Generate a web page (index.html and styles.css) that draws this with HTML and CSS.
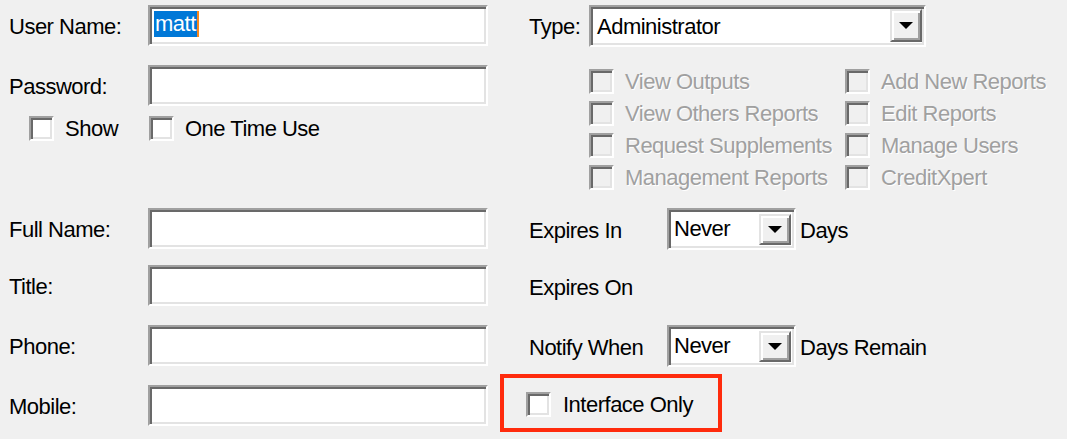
FILE: index.html
```html
<!DOCTYPE html>
<html>
<head>
<meta charset="utf-8">
<link rel="stylesheet" href="styles.css">
</head>
<body>
<div class="dialog">
  <div class="cell top-left">
    <div class="row">
      <span class="lbl">User Name:</span>
      <div class="field"><span class="sel">matt</span><span class="caret"></span></div>
    </div>
    <div class="row row-pass">
      <span class="lbl">Password:</span>
      <div class="field"></div>
    </div>
    <div class="opts">
      <div class="cb cb-show"><span class="box"></span><span class="cb-text">Show</span></div>
      <div class="cb"><span class="box"></span><span class="cb-text">One Time Use</span></div>
    </div>
  </div>
  <div class="cell top-right">
    <div class="row">
      <span class="lbl-type">Type:</span>
      <div class="combo combo-type">
        <span class="combo-text">Administrator</span>
        <span class="combo-btn"><span class="arrow"></span></span>
      </div>
    </div>
    <div class="perms">
      <div class="cb disabled"><span class="box"></span><span class="cb-text">View Outputs</span></div>
      <div class="cb disabled"><span class="box"></span><span class="cb-text">Add New Reports</span></div>
      <div class="cb disabled"><span class="box"></span><span class="cb-text">View Others Reports</span></div>
      <div class="cb disabled"><span class="box"></span><span class="cb-text">Edit Reports</span></div>
      <div class="cb disabled"><span class="box"></span><span class="cb-text">Request Supplements</span></div>
      <div class="cb disabled"><span class="box"></span><span class="cb-text">Manage Users</span></div>
      <div class="cb disabled"><span class="box"></span><span class="cb-text">Management Reports</span></div>
      <div class="cb disabled"><span class="box"></span><span class="cb-text">CreditXpert</span></div>
    </div>
  </div>

  <div class="cell left">
    <div class="row"><span class="lbl">Full Name:</span><div class="field"></div></div>
  </div>
  <div class="cell right">
    <div class="row">
      <span class="lbl-right">Expires In</span>
      <div class="combo combo-small">
        <span class="combo-text">Never</span>
        <span class="combo-btn"><span class="arrow"></span></span>
      </div>
      <span class="after">Days</span>
    </div>
  </div>

  <div class="cell left">
    <div class="row"><span class="lbl">Title:</span><div class="field"></div></div>
  </div>
  <div class="cell right">
    <div class="row"><span class="lbl-right">Expires On</span></div>
  </div>

  <div class="cell left">
    <div class="row"><span class="lbl">Phone:</span><div class="field"></div></div>
  </div>
  <div class="cell right">
    <div class="row">
      <span class="lbl-right">Notify When</span>
      <div class="combo combo-small">
        <span class="combo-text">Never</span>
        <span class="combo-btn"><span class="arrow"></span></span>
      </div>
      <span class="after">Days Remain</span>
    </div>
  </div>

  <div class="cell left last-left">
    <div class="row"><span class="lbl">Mobile:</span><div class="field"></div></div>
  </div>
  <div class="cell right last-right">
    <div class="highlight">
      <div class="cb"><span class="box"></span><span class="cb-text">Interface Only</span></div>
    </div>
  </div>
</div>
</body>
</html>
```

FILE: styles.css
```css
html, body {
  margin: 0;
  padding: 0;
  background: #f0f0f0;
}

body {
  font-family: "Liberation Sans", Arial, sans-serif;
  font-size: 22px;
  line-height: 22px;
  letter-spacing: -0.5px;
  color: #000;
  width: 1067px;
  height: 439px;
  overflow: hidden;
  white-space: nowrap;
}

.dialog {
  display: grid;
  grid-template-columns: 500px 567px;
  grid-template-rows: 208px 57px 60px 49px 65px;
}

.cell {
  min-width: 0;
}

.left, .top-left {
  padding-left: 9px;
}

.top-left, .top-right {
  padding-top: 5px;
}

.right, .top-right {
  padding-left: 29px;
}

.row {
  display: flex;
  align-items: center;
}

.lbl {
  width: 139px;
  padding-top: 3px;
  flex: none;
}

.lbl-type {
  width: 60px;
  flex: none;
  padding-top: 2px;
}

.lbl-right {
  width: 138px;
  flex: none;
  padding-top: 4px;
  height: 41px;
  box-sizing: border-box;
  display: flex;
  align-items: center;
}

.after {
  margin-left: 4px;
  padding-top: 4px;
}

/* sunken text field */
.field {
  box-sizing: border-box;
  width: 340px;
  height: 41px;
  background: #fff;
  border: 2px solid;
  border-color: #a0a0a0 #fff #fff #a0a0a0;
  box-shadow: inset 2px 2px 0 #696969, inset -2px -2px 0 #e3e3e3;
  padding: 4px 0 0 4px;
  display: flex;
  align-items: flex-start;
  line-height: 26px;
}

.sel {
  background: #0078d7;
  color: #fff;
  padding: 0 1px 0 1px;
  height: 26px;
}

.caret {
  width: 2px;
  height: 26px;
  background: #f7861c;
}

.row-pass {
  margin-top: 19px;
}

/* checkboxes */
.opts {
  display: flex;
  margin-top: 10px;
  padding-left: 20px;
}

.cb {
  display: flex;
  align-items: center;
  height: 25px;
}

.cb-show {
  width: 120px;
}

.box {
  box-sizing: border-box;
  width: 25px;
  height: 25px;
  flex: none;
  background: #fff;
  border: 2px solid;
  border-color: #a0a0a0 #fff #fff #a0a0a0;
  box-shadow: inset 2px 2px 0 #696969, inset -2px -2px 0 #e3e3e3;
}

.cb-text {
  margin-left: 11px;
  padding-top: 1px;
}

.disabled .box {
  background: #f0f0f0;
}

.disabled .cb-text {
  color: #a0a0a0;
  text-shadow: 1px 1px 0 #fff;
}

.perms {
  display: grid;
  grid-template-columns: 256px 1fr;
  grid-auto-rows: 32px;
  margin-top: 22px;
  margin-left: 60px;
  align-items: start;
}

/* combo boxes */
.combo {
  box-sizing: border-box;
  height: 42px;
  background: #fff;
  border: 2px solid;
  border-color: #a0a0a0 #fff #fff #a0a0a0;
  box-shadow: inset 2px 2px 0 #696969, inset -2px -2px 0 #e3e3e3;
  display: flex;
  align-items: stretch;
  flex: none;
}

.combo-type {
  width: 337px;
  padding: 2px 2px 3px 2px;
}

.combo-small {
  width: 129px;
  padding: 4px 3px 3px 2px;
}

.combo-text {
  flex: 1;
  padding-left: 4px;
  line-height: 34px;
  padding-top: 1px;
}

.combo-small .combo-text {
  padding-left: 3px;
  line-height: 26px;
  padding-top: 2px;
}

.combo-btn {
  box-sizing: border-box;
  width: 32px;
  flex: none;
  background: #f0f0f0;
  border: 2px solid;
  border-color: #e3e3e3 #696969 #696969 #e3e3e3;
  box-shadow: inset 2px 2px 0 #fff, inset -2px -2px 0 #a0a0a0;
  display: flex;
  align-items: center;
  justify-content: center;
}

.arrow {
  width: 0;
  height: 0;
  border-left: 7px solid transparent;
  border-right: 7px solid transparent;
  border-top: 7px solid #000;
}

/* last row */
.last-left {
  padding-top: 11px;
}

.highlight {
  box-sizing: border-box;
  width: 222px;
  height: 58px;
  margin-left: -29px;
  border: 4px solid #ff2b0d;
  display: flex;
  align-items: center;
  padding: 2px 0 0 22px;
}

.highlight .cb-text {
  margin-left: 12px;
}
```
